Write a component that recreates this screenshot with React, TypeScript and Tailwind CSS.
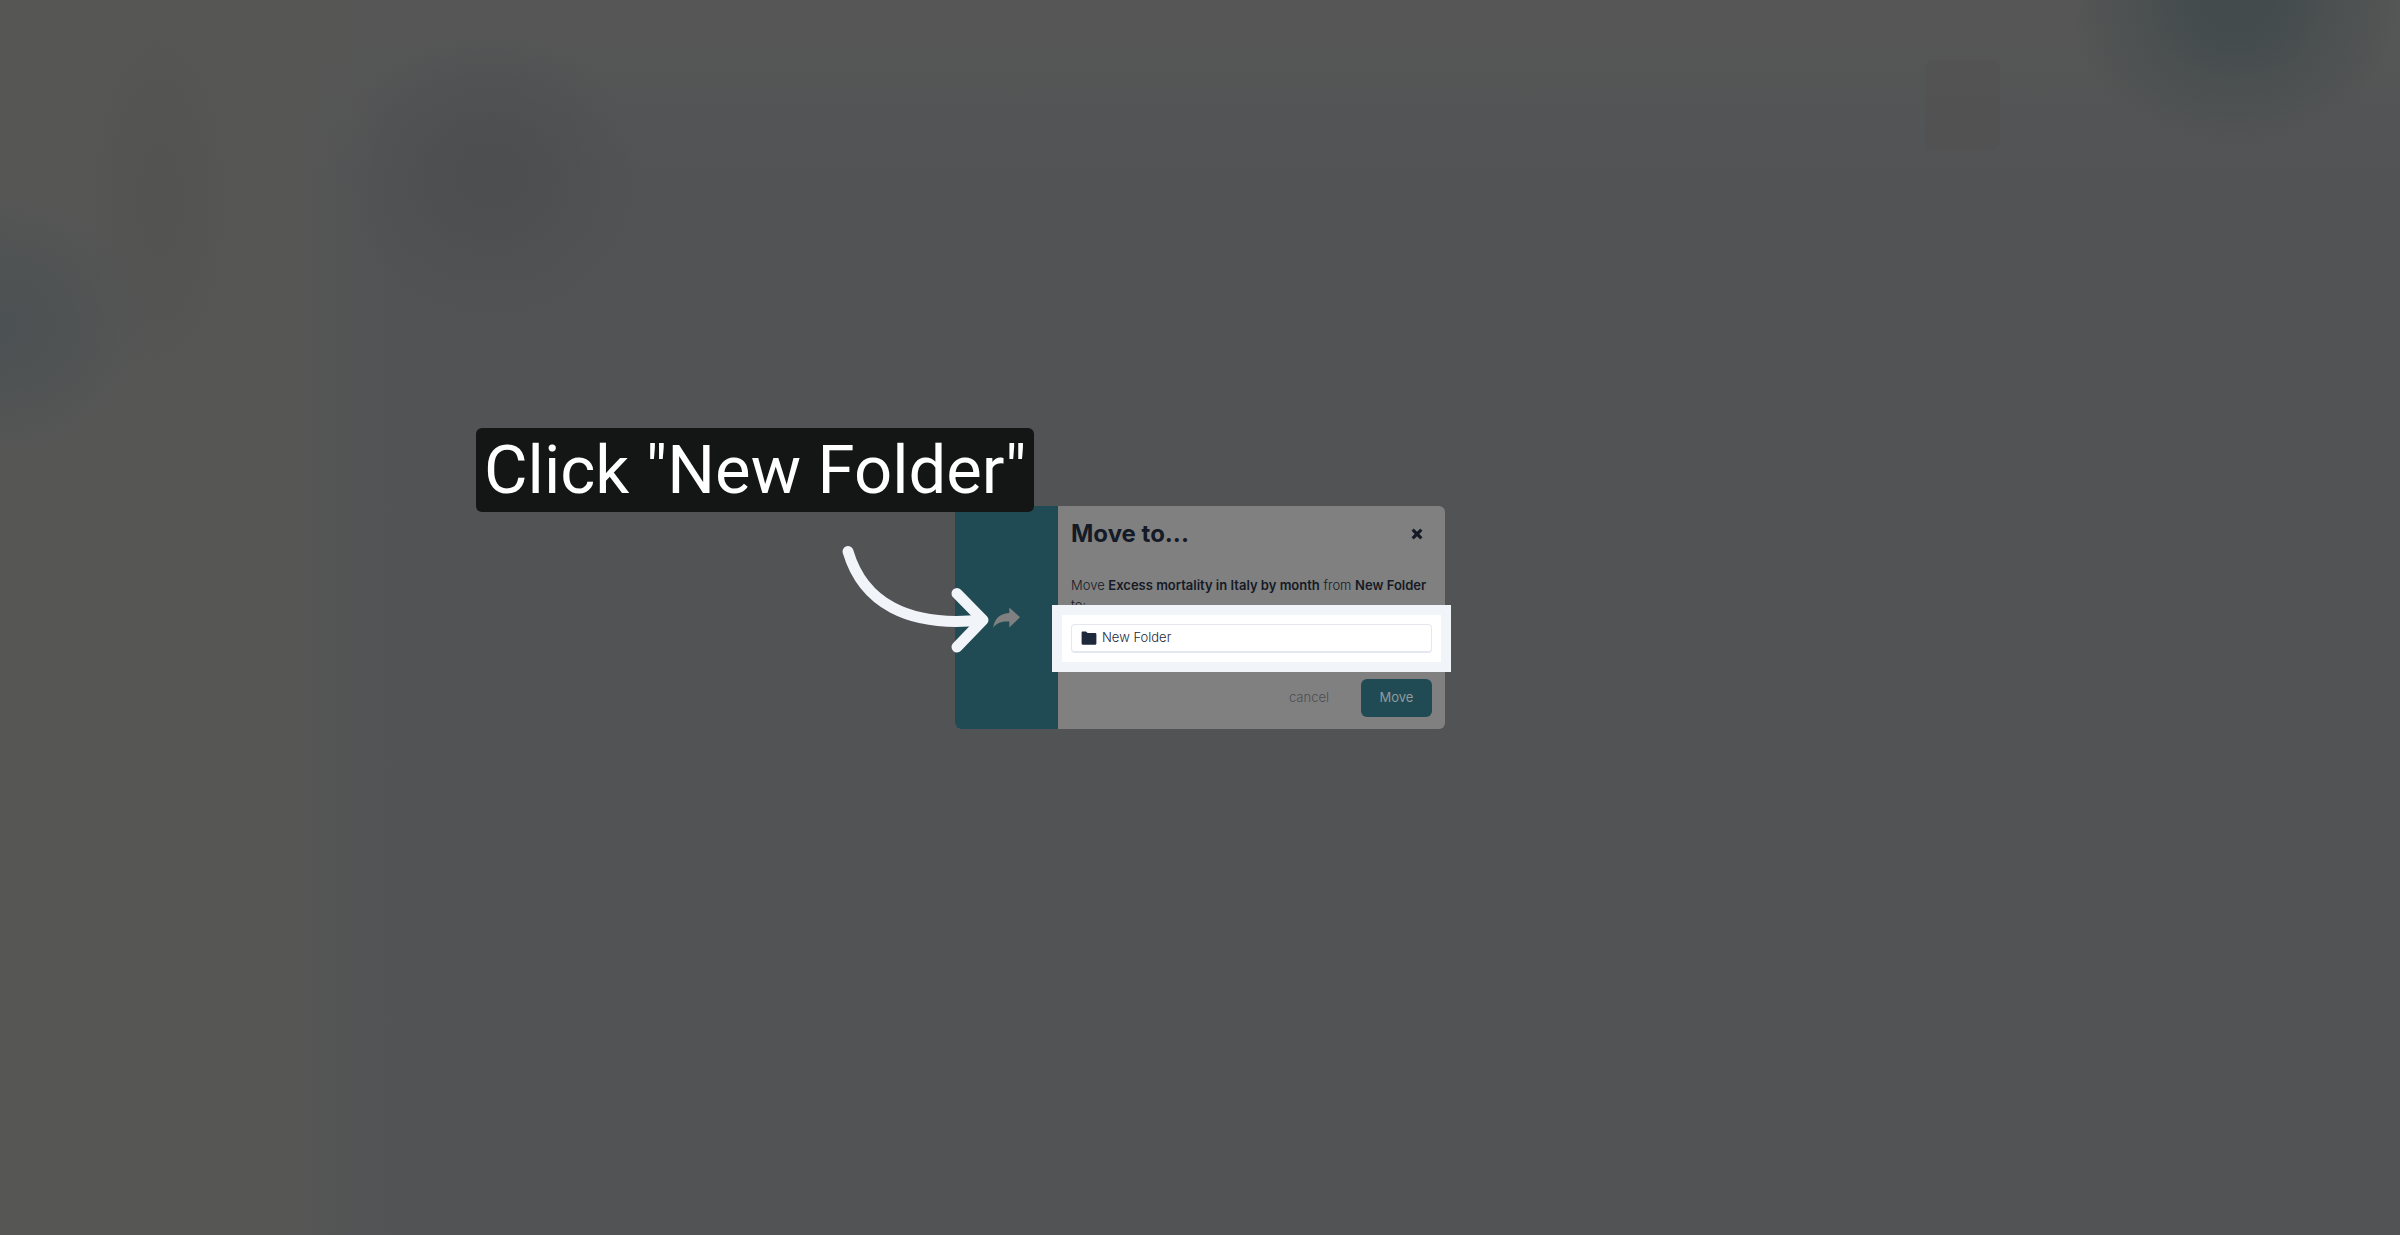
import React from 'react';
import { FaTimes } from 'react-icons/fa';

const ShareIcon = () => (
  <svg viewBox="0 0 27 21" className="h-[21px] w-[27px] fill-[#808080]" aria-hidden="true">
    <path d="M16.3 0.4 L27 10.3 L16.3 20.4 V14.6 C9 14.3 4 15.6 0.2 20.8 C1.2 13 6 6.4 16.3 6 Z" />
  </svg>
);

const FolderIcon = () => (
  <svg viewBox="0 0 16 14" className="h-[14px] w-[16px] fill-[#1e293b]" aria-hidden="true">
    <path d="M1.500 0.500 H5 L6.600 2 H14 Q15.400 2 15.400 3.400 V12.400 Q15.400 13.700 14 13.700 H2 Q0.600 13.700 0.600 12.400 V1.500 Q0.600 0.500 1.500 0.500 Z" />
  </svg>
);

const PointerArrow = () => (
  <svg
    viewBox="0 0 150 110"
    className="absolute top-[38px] -left-[114px] h-[110px] w-[150px] fill-none stroke-[#f1f4f9]"
    strokeWidth="11"
    strokeLinecap="round"
    strokeLinejoin="round"
    aria-hidden="true"
  >
    <path d="M7 7.500 C22 58 66 84 141 76" />
    <path d="M116 49.500 L142 76 L116 103" />
  </svg>
);

const Backdrop = () => (
  <div className="absolute inset-0 overflow-hidden bg-[#525355]" aria-hidden="true">
    <div className="absolute inset-x-0 top-0 h-[180px] bg-linear-to-b from-[#555655] from-20% to-[#555655]/0" />
    <div className="absolute inset-y-0 left-0 w-[400px] bg-linear-to-r from-[#565655] from-70% to-[#565655]/0" />
    <div className="absolute top-0 left-[80px] h-[400px] w-[160px] bg-radial-[closest-side] from-[#535352] from-20% to-[#535352]/0" />
    <div className="absolute top-[30px] left-[340px] h-[290px] w-[300px] bg-radial-[closest-side] from-[#4d4e50] from-20% to-[#4d4e50]/0" />
    <div className="absolute top-[190px] -left-[150px] h-[270px] w-[300px] bg-radial-[closest-side] from-[#4c5153] from-10% to-[#4c5153]/0" />
    <div className="absolute top-[60px] right-[400px] h-[90px] w-[75px] rounded-lg bg-[#535252]/60" />
    <div className="absolute -top-[150px] right-0 h-[300px] w-[330px] bg-radial-[closest-side] from-[#434b4d] from-20% to-[#434b4d]/0" />
  </div>
);

export default function App() {
  return (
    <main className="relative flex min-h-screen items-center justify-center font-['Inter',sans-serif]">
      <Backdrop />

      <div className="relative">
        <div
          role="dialog"
          aria-labelledby="move-title"
          className="flex w-[490px] rounded-md bg-[#808080] text-[#141a26]"
        >
          <div className="flex w-[103px] shrink-0 items-center justify-center rounded-l-md bg-[#204b54]">
            <ShareIcon />
          </div>

          <div className="min-w-0 flex-1 px-[13px] pt-3 pb-3">
            <div className="flex items-center justify-between">
              <h2 id="move-title" className="text-2xl leading-8 font-bold">Move to...</h2>
              <button type="button" aria-label="Close" className="px-2">
                <FaTimes className="size-3.5 stroke-current stroke-[30px]" />
              </button>
            </div>

            <p className="mt-[25px] text-[13px] leading-5 font-light">
              Move <b className="font-semibold">Excess mortality in Italy by month</b> from{' '}
              <b className="font-semibold">New Folder</b> to:
            </p>

            <div className="relative mt-[9px]">
              <div className="absolute -inset-[19px] border-10 border-[#f1f4f9] bg-white" />
              <button
                type="button"
                className="relative flex h-[29px] w-full items-center gap-[5px] rounded-sm border border-b-2 border-[#e5e7ef] bg-white px-[9px] text-[13px] font-light text-[#1e293b]"
              >
                <FolderIcon />
                New Folder
              </button>
            </div>

            <div className="mt-[26px] flex items-center justify-end gap-8">
              <button type="button" className="text-[13px] font-light text-[#4b4e53]">cancel</button>
              <button type="button" className="h-[38px] w-[71px] rounded-md bg-[#204b54] text-[13px] text-[#929a9c]">
                Move
              </button>
            </div>
          </div>
        </div>

        <div className="absolute -top-[78px] -left-[479px] rounded-md bg-[#141615] px-2 font-['Roboto',sans-serif] text-[67px] leading-[84px] whitespace-nowrap text-white">
          Click "New Folder"
        </div>
        <PointerArrow />
      </div>
    </main>
  );
}
